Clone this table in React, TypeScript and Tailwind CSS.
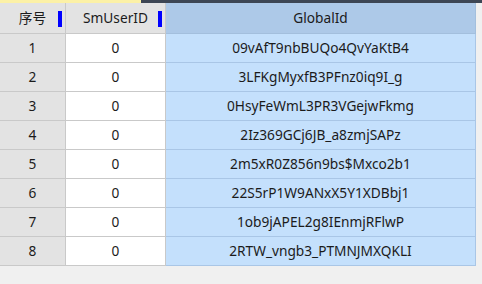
import React from "react";

const rows = [
  "09vAfT9nbBUQo4QvYaKtB4",
  "3LFKgMyxfB3PFnz0iq9I_g",
  "0HsyFeWmL3PR3VGejwFkmg",
  "2Iz369GCj6JB_a8zmjSAPz",
  "2m5xR0Z856n9bs$Mxco2b1",
  "22S5rP1W9ANxX5Y1XDBbj1",
  "1ob9jAPEL2g8IEnmjRFlwP",
  "2RTW_vngb3_PTMNJMXQKLI",
];

export default function App() {
  return (
    <div
      className="w-[482px] h-[284px] bg-[#f0f0f0] text-[13.7px] text-[#1b1b1b] overflow-hidden"
      style={{ fontFamily: '"Noto Sans", "Noto Sans CJK SC", sans-serif' }}
    >
      {/* top strip */}
      <div className="flex h-[3px]">
        <div className="w-[141px] bg-[#fcf1a6]" />
        <div className="flex-1 bg-[#3d4654]" />
      </div>

      <div className="grid grid-cols-[66px_100px_310px] w-[476px]">
        {/* header */}
        <div className="relative h-[31px] flex items-center justify-center bg-[#e3e3e3] border-r border-b border-[#c9c9c9]">
          序号
          <span className="absolute right-[3px] top-[8px] w-[4px] h-[16px] bg-[#0000ff]" />
        </div>
        <div className="relative h-[31px] flex items-center justify-center bg-[#e3e3e3] border-r border-b border-[#c9c9c9]">
          SmUserID
          <span className="absolute right-[3px] top-[8px] w-[4px] h-[16px] bg-[#0000ff]" />
        </div>
        <div className="h-[31px] flex items-center justify-center bg-[#adc9e8] border-r border-b border-[#a3bfdd]">
          GlobalId
        </div>

        {rows.map((id, i) => (
          <React.Fragment key={id}>
            <div className="h-[29px] flex items-center justify-center bg-[#e3e3e3] border-r border-b border-[#c9c9c9]">
              {i + 1}
            </div>
            <div className="h-[29px] flex items-center justify-center bg-white border-r border-b border-[#c9c9c9]">
              0
            </div>
            <div className="h-[29px] flex items-center justify-center bg-[#c4e0fc] border-r border-b border-[#a9c6e6]">
              {id}
            </div>
          </React.Fragment>
        ))}
      </div>
    </div>
  );
}
